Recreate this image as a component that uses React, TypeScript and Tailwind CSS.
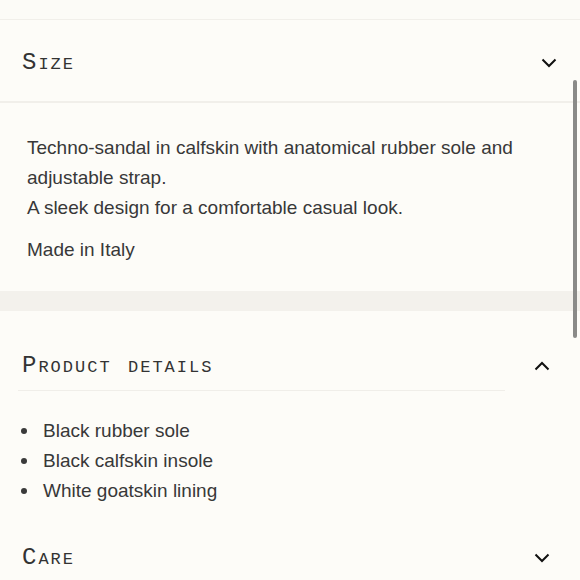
export default function App() {
  const details = ["Black rubber sole", "Black calfskin insole", "White goatskin lining"]

  const headingFont = {
    fontFamily: '"Liberation Mono", "DejaVu Sans Mono", monospace',
  }

  return (
    <div className="relative h-[580px] w-[580px] overflow-hidden bg-[#fdfcf8] text-[#333]">
      {/* Top strip */}
      <div className="h-[20px] border-b border-[#f1efea] bg-[#fcfbf7]" />

      {/* Size */}
      <div className="flex h-[83px] items-center justify-between border-b-2 border-[#f1efea] pl-[22px] pr-[23px] pt-[4px]">
        <span className="text-[24px] leading-[28px] tracking-[2px] [font-variant:small-caps]" style={headingFont}>
          Size
        </span>
        <Chevron />
      </div>

      {/* Description */}
      <div
        className="px-[27px] pb-[26px] pt-[30px] text-[19px] leading-[30px] text-[#383838]"
        style={{ fontFamily: '"Liberation Sans", Arial, sans-serif' }}
      >
        <p>
          Techno-sandal in calfskin with anatomical rubber sole and adjustable strap.
          <br />A sleek design for a comfortable casual look.
        </p>
        <p className="mt-[12px]">Made in Italy</p>
      </div>

      <div className="h-[20px] bg-[#f3f1ec]" />

      {/* Product details */}
      <div className="flex items-center justify-between pl-[22px] pr-[30px] pt-[41px] pb-[10px]">
        <span className="text-[24px] leading-[28px] tracking-[2px] [font-variant:small-caps]" style={headingFont}>
          Product details
        </span>
        <Chevron up />
      </div>
      <div className="ml-[18px] h-px w-[487px] bg-[#f0eee9]" />

      <ul
        className="mt-[25px] text-[19px] leading-[30px] text-[#383838]"
        style={{ fontFamily: '"Liberation Sans", Arial, sans-serif' }}
      >
        {details.map((d) => (
          <li key={d} className="flex items-center">
            <span className="ml-[21px] mr-[16px] h-[6px] w-[6px] rounded-full bg-[#3a3a3a]" />
            {d}
          </li>
        ))}
      </ul>

      {/* Care */}
      <div className="mt-[38px] flex items-center justify-between pl-[22px] pr-[30px]">
        <span className="text-[24px] leading-[28px] tracking-[2px] [font-variant:small-caps]" style={headingFont}>
          Care
        </span>
        <Chevron />
      </div>

      {/* Scrollbar */}
      <div className="absolute right-[3px] top-[80px] h-[258px] w-[4px] rounded-full bg-[#8a8a88]" />
    </div>
  )
}

function Chevron({ up = false }: { up?: boolean }) {
  return (
    <svg width="16" height="10" viewBox="0 0 16 10" fill="none" className="shrink-0">
      <path
        d={up ? "M1.5 8.5L8 2L14.5 8.5" : "M1.5 1.5L8 8L14.5 1.5"}
        stroke="#111"
        strokeWidth="2"
      />
    </svg>
  )
}
